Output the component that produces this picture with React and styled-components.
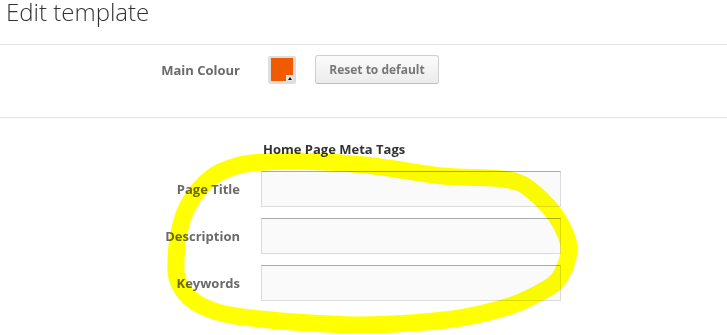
import React from "react";
import styled, { createGlobalStyle } from "styled-components";

const GlobalStyle = createGlobalStyle`
  html, body { margin: 0; padding: 0; background: #fff; }
  body { font-family: "Open Sans", "Liberation Sans", sans-serif; }
`;

const Page = styled.div`
  position: relative;
  width: 727px;
  height: 335px;
  overflow: hidden;
  background: #fff;
`;

const Header = styled.header`
  height: 44px;
  border-bottom: 1px solid #e3e3e3;
  padding: 0 6px;
`;

const Title = styled.h1`
  margin: 0;
  font-size: 24px;
  line-height: 24px;
  font-weight: 300;
  color: #333;
`;

const Section = styled.section`
  padding: ${(p) => p.$pad};
  border-bottom: ${(p) => (p.$divider ? "1px solid #e3e3e3" : "none")};
  display: flex;
  flex-direction: column;
  gap: 11px;
`;

const Row = styled.div`
  display: grid;
  grid-template-columns: 240px auto;
  column-gap: 21px;
  align-items: center;
  height: ${(p) => p.$h || 36}px;
`;

const Label = styled.label`
  text-align: right;
  font-size: 13px;
  font-weight: 700;
  color: #6a6a6a;
`;

const SubHeading = styled.h2`
  margin: 0 0 2px 263px;
  font-size: 13px;
  line-height: 18px;
  font-weight: 700;
  color: #333;
`;

const Controls = styled.div`
  display: flex;
  align-items: center;
  gap: 19px;
  padding-left: 7px;
`;

const Swatch = styled.div`
  position: relative;
  width: 28px;
  height: 28px;
  box-sizing: border-box;
  background: #dedede;
  border-radius: 2px;
  padding: 2px 3px 3px 3px;
`;

const SwatchColor = styled.div`
  width: 22px;
  height: 23px;
  background: ${(p) => p.$color};
`;

const Caret = styled.div`
  position: absolute;
  right: 3px;
  bottom: 3px;
  width: 7px;
  height: 6px;
  background: #e6e6e6;
  display: flex;
  align-items: flex-end;
  justify-content: center;
  &::after {
    content: "";
    width: 0;
    height: 0;
    margin-bottom: 1px;
    border-left: 2.5px solid transparent;
    border-right: 2.5px solid transparent;
    border-bottom: 3px solid #111;
  }
`;

const Button = styled.button`
  height: 29px;
  width: 124px;
  box-sizing: border-box;
  border: 1px solid #cfcfcf;
  border-bottom-color: #bdbdbd;
  border-radius: 3px;
  background: linear-gradient(#fbfbfb, #ececec);
  font-family: "Open Sans", "Liberation Sans", sans-serif;
  font-size: 12px;
  font-weight: 700;
  color: #777;
  padding: 0;
  cursor: pointer;
`;

const Input = styled.input`
  width: 300px;
  height: 36px;
  box-sizing: border-box;
  border: 1px solid #dcdcdc;
  border-top-color: #a9a9a9;
  background: #fafafa;
  margin: 0;
  font-family: inherit;
`;

const Highlight = styled.svg`
  position: absolute;
  inset: 0;
  pointer-events: none;
  mix-blend-mode: multiply;
`;

const loop = [
  [176, 262], [178, 238], [185, 212], [197, 192], [215, 175], [240, 165],
  [265, 162], [298, 161], [365, 165], [443, 176], [493, 178], [520, 183],
  [540, 198], [556, 216], [566, 235], [569, 250], [565, 267], [555, 283],
  [535, 295], [510, 306], [460, 318], [410, 323], [360, 325], [310, 323],
  [260, 319], [225, 314], [200, 305], [185, 293], [177, 278],
];

function closedSpline(pts) {
  const n = pts.length;
  let d = `M${pts[0][0]},${pts[0][1]}`;
  for (let i = 0; i < n; i++) {
    const p0 = pts[(i - 1 + n) % n];
    const p1 = pts[i];
    const p2 = pts[(i + 1) % n];
    const p3 = pts[(i + 2) % n];
    const c1 = [p1[0] + (p2[0] - p0[0]) / 6, p1[1] + (p2[1] - p0[1]) / 6];
    const c2 = [p2[0] - (p3[0] - p1[0]) / 6, p2[1] - (p3[1] - p1[1]) / 6];
    d += ` C${c1[0].toFixed(1)},${c1[1].toFixed(1)} ${c2[0].toFixed(1)},${c2[1].toFixed(1)} ${p2[0]},${p2[1]}`;
  }
  return d + "Z";
}

const fields = ["Page Title", "Description", "Keywords"];

export default function App() {
  return (
    <>
      <GlobalStyle />
      <Page>
        <Header>
          <Title>Edit template</Title>
        </Header>
        <Section $pad="10px 0 33px" $divider>
          <Row $h={29}>
            <Label>Main Colour</Label>
            <Controls>
              <Swatch>
                <SwatchColor $color="#f25a00" />
                <Caret />
              </Swatch>
              <Button>Reset to default</Button>
            </Controls>
          </Row>
        </Section>
        <Section $pad="22px 0 0">
          <SubHeading>Home Page Meta Tags</SubHeading>
          {fields.map((f) => (
            <Row key={f}>
              <Label>{f}</Label>
              <Input type="text" />
            </Row>
          ))}
        </Section>
        <Highlight width="727" height="335" viewBox="0 0 727 335">
          <path
            d={closedSpline(loop)}
            fill="none"
            stroke="#ffff00"
            strokeWidth="17"
            strokeLinejoin="round"
          />
        </Highlight>
      </Page>
    </>
  );
}
